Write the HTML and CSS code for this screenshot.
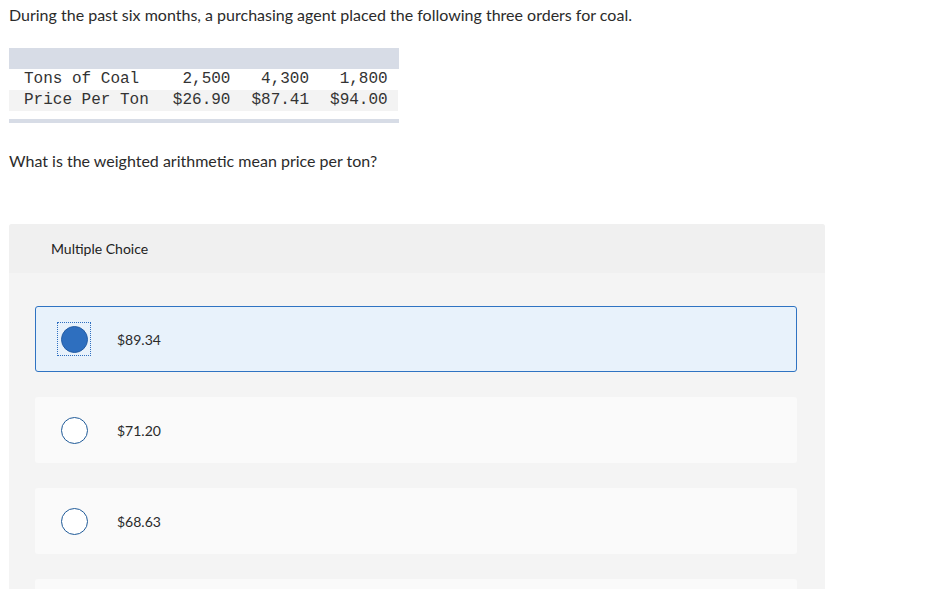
FILE: index.html
```html
<!DOCTYPE html>
<html lang="en">
<head>
<meta charset="utf-8">
<title>Weighted mean question</title>
<link rel="stylesheet" href="styles.css">
</head>
<body>
<div class="page">
  <p class="intro">During the past six months, a purchasing agent placed the following three orders for coal.</p>
  <div class="data">
    <div class="data-head"></div>
    <table class="data-table">
      <tr class="row-a">
        <td class="lbl">Tons of Coal</td><td>2,500</td><td>4,300</td><td>1,800</td>
      </tr>
      <tr class="row-b">
        <td class="lbl">Price Per Ton</td><td>$26.90</td><td>$87.41</td><td>$94.00</td>
      </tr>
    </table>
    <div class="data-foot"></div>
  </div>
  <p class="question">What is the weighted arithmetic mean price per ton?</p>
  <section class="mc">
    <div class="mc-head">Multiple Choice</div>
    <div class="mc-body">
      <div class="opt opt-selected">
        <span class="focus"><span class="radio radio-on"></span></span>
        <span class="opt-text">$89.34</span>
      </div>
      <div class="opt">
        <span class="focus focus-off"><span class="radio"></span></span>
        <span class="opt-text">$71.20</span>
      </div>
      <div class="opt">
        <span class="focus focus-off"><span class="radio"></span></span>
        <span class="opt-text">$68.63</span>
      </div>
      <div class="opt">
        <span class="focus focus-off"><span class="radio"></span></span>
        <span class="opt-text">$69.44</span>
      </div>
    </div>
  </section>
</div>
</body>
</html>
```
FILE: styles.css
```css
html, body {
  margin: 0;
  padding: 0;
  background: #ffffff;
}
body {
  font-family: "Lato", "Open Sans", sans-serif;
  color: #2b2b2b;
}
.page {
  padding: 0 0 0 9px;
  width: 816px;
}
.intro {
  margin: 0;
  padding-top: 5px;
  font-size: 16px;
  line-height: 20px;
}
.data {
  margin-top: 23px;
  width: 390px;
}
.data-head {
  height: 21px;
  background: #d7dce6;
}
.data-table {
  border-collapse: collapse;
  font-family: "Liberation Mono", "Courier New", monospace;
  font-size: 16px;
  color: #333;
}
.data-table td {
  height: 21px;
  padding: 0 10px 0 11px;
  text-align: right;
  line-height: 21px;
  white-space: pre;
}
.data-table td.lbl {
  text-align: left;
  padding-left: 15px;
  padding-right: 13px;
}
.row-a { background: #ffffff; }
.row-b { background: #f3f3f3; }
.data-foot {
  margin-top: 8px;
  height: 4px;
  background: #d7dce6;
}
.question {
  margin: 28px 0 0 0;
  font-size: 16px;
  line-height: 20px;
}
.mc {
  margin-top: 53px;
  background: #f4f4f4;
  border-radius: 3px 3px 0 0;
}
.mc-head {
  height: 49px;
  background: #f0f0f0;
  border-radius: 3px 3px 0 0;
  padding-left: 42px;
  font-size: 14px;
  line-height: 49px;
  color: #222;
}
.mc-body {
  padding: 33px 28px 30px 26px;
  display: flex;
  flex-direction: column;
  gap: 25px;
}
.opt {
  height: 64px;
  border: 1px solid transparent;
  border-radius: 3px;
  background: #fafafa;
  display: flex;
  align-items: center;
  padding-left: 21px;
}
.opt-selected {
  background: #e8f2fb;
  border-color: #2f73c2;
}
.focus {
  width: 32px;
  height: 32px;
  border: 1px dotted #2f6fc0;
  display: flex;
  align-items: center;
  justify-content: center;
  flex: none;
}
.focus-off {
  border-color: transparent;
}
.radio {
  width: 25px;
  height: 25px;
  border: 1.5px solid #1f5a98;
  border-radius: 50%;
  background: #ffffff;
  box-sizing: content-box;
}
.radio-on {
  background: #2e6fbf;
  border-color: #245ca3;
}
.opt-text {
  margin-left: 26px;
  font-size: 14px;
  color: #2b2b2b;
}
```
